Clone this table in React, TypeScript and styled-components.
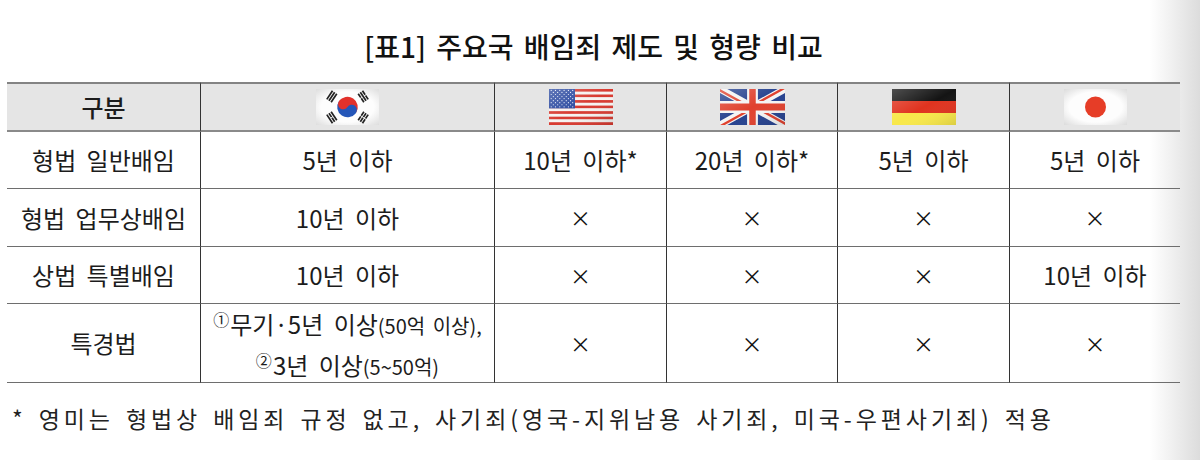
import React from 'react'
import styled, { createGlobalStyle } from 'styled-components'

const GlobalStyle = createGlobalStyle`
  html, body {
    margin: 0;
    padding: 0;
  }
  body {
    width: 1200px;
    height: 460px;
    overflow: hidden;
    background: linear-gradient(90deg, #fff 0, #fff 1150px, #f0f0f0 1172px, #dcdcdc 1200px);
    font-family: "Noto Sans CJK KR", "Noto Sans", sans-serif;
    color: #1c1c1c;
  }
`

const Page = styled.div`
  padding: 28px 0 0 7px;
  width: 1173px;
`

const Title = styled.h1`
  margin: 0;
  height: 36px;
  line-height: 36px;
  text-align: center;
  font-size: 28px;
  font-weight: 500;
  color: #111;
  word-spacing: 4px;
`

const Grid = styled.div`
  margin-top: 18px;
  display: grid;
  grid-template-columns: 193px 294px 172px 171px 172px 171px;
  grid-template-rows: 50px 57px 58px 57px 79px;
`

const Cell = styled.div<{ $head?: boolean; $first?: boolean }>`
  box-sizing: border-box;
  display: flex;
  flex-direction: column;
  align-items: center;
  justify-content: center;
  text-align: center;
  font-size: 24px;
  line-height: 1;
  word-spacing: 5px;
  white-space: nowrap;
  border-left: ${p => (p.$first ? 'none' : '1.5px solid #333')};
  border-top: ${p => (p.$head ? '2px solid #838383' : 'none')};
  border-bottom: ${p => (p.$head ? '2px solid #8a8a8a' : '1px solid #6e6e6e')};
  background: ${p => (p.$head ? '#e5e5e5' : 'transparent')};
  font-weight: ${p => (p.$head ? 500 : 400)};
`

const Cross = styled.span`
  font-size: 21px;
  color: #111;
`

const Line = styled.div`
  line-height: 34px;
`

const Circled = styled.span`
  font-size: 16px;
  vertical-align: 8px;
  margin-right: 1px;
`

const Small = styled.span`
  font-size: 20px;
  word-spacing: 3px;
`

const Note = styled.p`
  margin: 20px 0 0 5px;
  line-height: 30px;
  font-size: 23px;
  letter-spacing: 3.9px;
  word-spacing: 3px;
  color: #222;
  white-space: nowrap;
`

const Flag = styled.svg`
  display: block;
`

const Gloss = ({ id }: { id: string }) => (
  <linearGradient id={id} x1="0" y1="0" x2="1" y2="1">
    <stop offset="0" stopColor="#fff" stopOpacity="0.25" />
    <stop offset="0.5" stopColor="#fff" stopOpacity="0" />
    <stop offset="1" stopColor="#000" stopOpacity="0.12" />
  </linearGradient>
)

const Trigram = ({ bars, xs }: { bars: boolean[]; xs: number[] }) => (
  <>
    {bars.map((solid, i) =>
      solid ? (
        <rect key={i} x={xs[i] - 1} y={-6} width={2} height={12} fill="#222" />
      ) : (
        <g key={i}>
          <rect x={xs[i] - 1} y={-6} width={2} height={5.5} fill="#222" />
          <rect x={xs[i] - 1} y={0.5} width={2} height={5.5} fill="#222" />
        </g>
      )
    )}
  </>
)

const KoreaFlag = () => (
  <Flag width={63} height={36} viewBox="-36.75 -21 73.5 42">
    <defs>
      <radialGradient id="krbg" cx="0.5" cy="0.5" r="0.7">
        <stop offset="0.6" stopColor="#fdfdfd" />
        <stop offset="1" stopColor="#dedede" />
      </radialGradient>
    </defs>
    <rect x={-36.75} y={-21} width={73.5} height={42} fill="url(#krbg)" />
    <g transform="rotate(33.69)">
      <path d="M-12,0 A12,12 0 0 1 12,0 Z" fill="#e2312b" />
      <path d="M-12,0 A12,12 0 0 0 12,0 Z" fill="#2456b8" />
      <circle cx={-6} r={6} fill="#e2312b" />
      <circle cx={6} r={6} fill="#2456b8" />
      <Trigram bars={[true, true, true]} xs={[-25, -22, -19]} />
      <Trigram bars={[false, false, false]} xs={[19, 22, 25]} />
    </g>
    <g transform="rotate(-33.69)">
      <Trigram bars={[false, true, false]} xs={[19, 22, 25]} />
      <Trigram bars={[true, false, true]} xs={[-25, -22, -19]} />
    </g>
  </Flag>
)

const UsaFlag = () => {
  const stripes = Array.from({ length: 13 }, (_, i) => i)
  const stars: [number, number][] = []
  for (let r = 0; r < 9; r++) {
    const n = r % 2 === 0 ? 6 : 5
    for (let c = 0; c < n; c++) {
      stars.push([2.2 + c * 4.3 + (r % 2 ? 2.15 : 0), 1.4 + r * 2.05])
    }
  }
  return (
    <Flag width={64} height={36} viewBox="0 0 64 36">
      <defs>
        <Gloss id="usgl" />
      </defs>
      {stripes.map(i => (
        <rect
          key={i}
          x={0}
          y={(i * 36) / 13}
          width={64}
          height={36 / 13}
          fill={i % 2 === 0 ? '#d83a30' : '#f6f3f1'}
        />
      ))}
      <rect x={0} y={0} width={26} height={(7 * 36) / 13} fill="#2c4aa0" />
      {stars.map(([x, y], i) => (
        <circle key={i} cx={x} cy={y} r={0.6} fill="#e8ecf8" />
      ))}
      <rect x={0} y={0} width={64} height={36} fill="url(#usgl)" />
    </Flag>
  )
}

const UkFlag = () => (
  <Flag width={65} height={36} viewBox="0 0 60 30" preserveAspectRatio="none">
    <defs>
      <clipPath id="uks">
        <path d="M0,0 v30 h60 v-30 z" />
      </clipPath>
      <clipPath id="ukt">
        <path d="M30,15 h30 v15 z v15 h-30 z h-30 v-15 z v-15 h30 z" />
      </clipPath>
      <Gloss id="ukgl" />
    </defs>
    <g clipPath="url(#uks)">
      <path d="M0,0 v30 h60 v-30 z" fill="#26428f" />
      <path d="M0,0 L60,30 M60,0 L0,30" stroke="#f4f4f4" strokeWidth={6} />
      <path d="M0,0 L60,30 M60,0 L0,30" clipPath="url(#ukt)" stroke="#e0412e" strokeWidth={4} />
      <path d="M30,0 v30 M0,15 h60" stroke="#f4f4f4" strokeWidth={10} />
      <path d="M30,0 v30 M0,15 h60" stroke="#e0412e" strokeWidth={6} />
      <rect x={0} y={0} width={60} height={30} fill="url(#ukgl)" />
    </g>
  </Flag>
)

const GermanyFlag = () => (
  <Flag width={64} height={36} viewBox="0 0 64 36">
    <defs>
      <Gloss id="degl" />
    </defs>
    <rect x={0} y={0} width={64} height={12} fill="#141414" />
    <rect x={0} y={12} width={64} height={12} fill="#e0331f" />
    <rect x={0} y={24} width={64} height={12} fill="#f8e84a" />
    <rect x={0} y={0} width={64} height={36} fill="url(#degl)" />
  </Flag>
)

const JapanFlag = () => (
  <Flag width={63} height={36} viewBox="0 0 63 36">
    <defs>
      <radialGradient id="jpbg" cx="0.5" cy="0.5" r="0.7">
        <stop offset="0.6" stopColor="#fdfdfd" />
        <stop offset="1" stopColor="#dcdcdc" />
      </radialGradient>
    </defs>
    <rect x={0} y={0} width={63} height={36} fill="url(#jpbg)" />
    <circle cx={31.5} cy={18} r={10.5} fill="#e63d27" />
  </Flag>
)

type Row = { label: string; values: React.ReactNode[] }

const X = <Cross>×</Cross>

const rows: Row[] = [
  { label: '형법 일반배임', values: ['5년 이하', '10년 이하*', '20년 이하*', '5년 이하', '5년 이하'] },
  { label: '형법 업무상배임', values: ['10년 이하', X, X, X, X] },
  { label: '상법 특별배임', values: ['10년 이하', X, X, X, '10년 이하'] },
  {
    label: '특경법',
    values: [
      <>
        <Line>
          <Circled>①</Circled>무기·5년 이상<Small>(50억 이상),</Small>
        </Line>
        <Line>
          <Circled>②</Circled>3년 이상<Small>(5~50억)</Small>
        </Line>
      </>,
      X,
      X,
      X,
      X,
    ],
  },
]

const flags = [KoreaFlag, UsaFlag, UkFlag, GermanyFlag, JapanFlag]

export default function App() {
  return (
    <>
      <GlobalStyle />
      <Page>
        <Title>[표1] 주요국 배임죄 제도 및 형량 비교</Title>
        <Grid>
          <Cell $head $first>
            구분
          </Cell>
          {flags.map((F, i) => (
            <Cell $head key={i}>
              <F />
            </Cell>
          ))}
          {rows.map(row => (
            <React.Fragment key={row.label}>
              <Cell $first>{row.label}</Cell>
              {row.values.map((v, i) => (
                <Cell key={i}>{v}</Cell>
              ))}
            </React.Fragment>
          ))}
        </Grid>
        <Note>* 영미는 형법상 배임죄 규정 없고, 사기죄(영국-지위남용 사기죄, 미국-우편사기죄) 적용</Note>
      </Page>
    </>
  )
}
